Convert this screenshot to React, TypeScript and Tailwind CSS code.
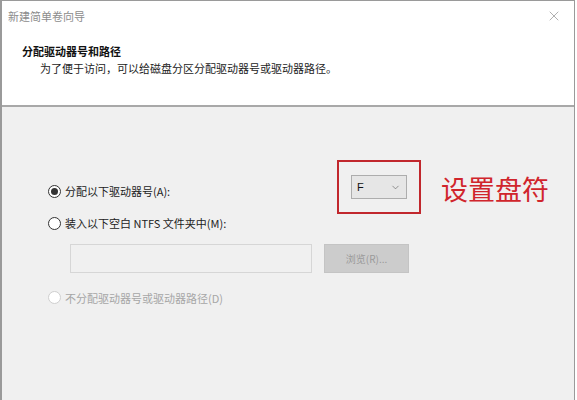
import { ChevronDown, X } from 'lucide-react';

const cjk = { fontFamily: '"Noto Sans CJK SC", "Liberation Sans", sans-serif' };

function Radio({ checked, disabled }: { checked?: boolean; disabled?: boolean }) {
  return (
    <span
      className={`w-[13px] h-[13px] rounded-full border flex items-center justify-center bg-white shrink-0 ${
        disabled ? 'border-[#cfcfcf]' : 'border-[#333]'
      }`}
    >
      {checked && <span className="w-[7px] h-[7px] rounded-full bg-[#333]" />}
    </span>
  );
}

export default function App() {
  return (
    <div className="w-[577px] h-[400px] bg-white overflow-hidden" style={cjk}>
      <div className="w-[575px] h-[400px] border-l-2 border-r border-t border-[#9a9a9a] flex flex-col">
        {/* 向导标题区 */}
        <div className="h-[106px] bg-white border-b-2 border-[#a8a8a8] relative">
          <div className="flex items-center justify-between pl-[6px] pr-[12px] pt-[7px]">
            <span className="text-[11px] text-[#8c8c8c]">新建简单卷向导</span>
            <X size={16} strokeWidth={1} className="text-[#888]" />
          </div>
          <div className="pl-[20px] pt-[18px] text-[11px] font-bold text-[#111]">分配驱动器号和路径</div>
          <div className="pl-[38px] pt-[1px] text-[11px] text-[#222]">
            为了便于访问，可以给磁盘分区分配驱动器号或驱动器路径。
          </div>
        </div>

        {/* 选项区 */}
        <div className="flex-1 bg-[#f0f0f0] pl-[46px] pt-[53px]">
          <div className="flex items-center">
            <div className="w-[289px] flex items-center gap-[4px] pt-[8px] text-[11px] text-[#222]">
              <Radio checked />
              <span>分配以下驱动器号(A):</span>
            </div>
            <div className="w-[84px] h-[54px] border-2 border-[#c1272d] flex items-center justify-center">
              <div className="w-[56px] h-[24px] bg-[#e6e6e6] border border-[#adadad] flex items-center justify-between px-[5px]">
                <span className="text-[11px] text-[#111]" style={{ fontFamily: '"Liberation Sans", sans-serif' }}>F</span>
                <ChevronDown size={11} strokeWidth={1.3} className="text-[#555]" />
              </div>
            </div>
            <span className="ml-[20px] text-[27px] leading-none text-[#d0252c] pt-[2px]">设置盘符</span>
          </div>

          <div className="flex items-center gap-[4px] mt-[1px] text-[11px] text-[#222]">
            <Radio />
            <span>装入以下空白 NTFS 文件夹中(M):</span>
          </div>

          <div className="flex items-center mt-[12px] pl-[22px]">
            <div className="w-[242px] h-[29px] bg-[#f0f0f0] border border-[#d6d6d6]" />
            <div className="ml-[12px] w-[85px] h-[29px] bg-[#cccccc] border border-[#c4c4c4] flex items-center justify-center text-[10px] text-[#9a9a9a]">
              浏览(R)...
            </div>
          </div>

          <div className="flex items-center gap-[4px] mt-[17px] text-[11px] text-[#a6a6a6]">
            <Radio disabled />
            <span>不分配驱动器号或驱动器路径(D)</span>
          </div>
        </div>
      </div>
    </div>
  );
}
